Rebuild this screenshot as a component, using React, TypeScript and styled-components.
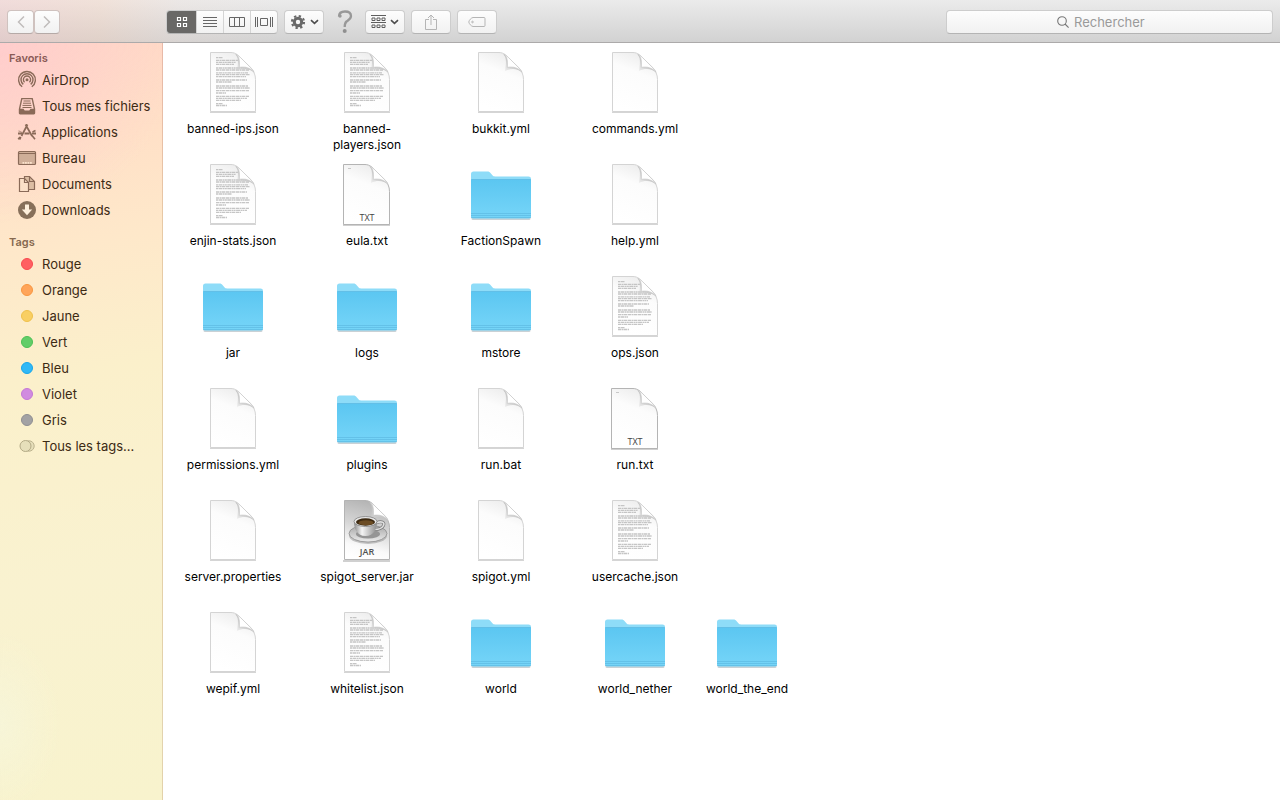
import React from "react";
import styled, { createGlobalStyle, css } from "styled-components";

const GlobalStyle = createGlobalStyle`
  *, *::before, *::after { box-sizing: border-box; }
  body {
    margin: 0;
    font-family: Inter, "Liberation Sans", sans-serif;
    font-size: 13px;
    background: #fff;
    color: #000;
  }
  button, input { font: inherit; color: inherit; }
  ul { list-style: none; margin: 0; padding: 0; }
  svg { display: block; flex: none; }
`;

const Window = styled.div`
  display: flex;
  flex-direction: column;
  min-height: 100vh;
`;

const Toolbar = styled.header`
  display: flex;
  align-items: center;
  gap: 6px;
  padding: 10px 7px 8px;
  border-bottom: 1px solid #acaaaa;
  background:
    linear-gradient(to right, rgba(255, 190, 186, 0.32), rgba(255, 205, 178, 0.3) 100px, rgba(240, 220, 212, 0.2) 180px, rgba(235, 235, 235, 0) 280px),
    linear-gradient(#ebebeb, #d2d2d2);
`;

const NavGroup = styled.nav`
  display: flex;
  width: 153px;
`;

const face = css`
  border: 1px solid #cdcdcd;
  border-bottom-color: #b4b4b4;
  background: linear-gradient(#fdfdfd, #f1f1f1);
`;

const ToolButton = styled.button<{ $width: number }>`
  ${face}
  display: flex;
  align-items: center;
  justify-content: center;
  gap: 4px;
  width: ${(p) => p.$width}px;
  height: 24px;
  padding: 0;
  border-radius: 4px;
`;

const NavButton = styled(ToolButton)`
  border-color: #cfc2bf;
  border-bottom-color: #b5aaa7;
`;

const HelpButton = styled.button`
  display: flex;
  align-items: center;
  justify-content: center;
  width: 29px;
  height: 24px;
  padding: 0;
  border: 0;
  background: none;
`;

const Segments = styled.div`
  ${face}
  display: flex;
  height: 24px;
  border-radius: 4px;
  overflow: hidden;
`;

const Segment = styled.button<{ $active?: boolean }>`
  display: flex;
  align-items: center;
  justify-content: center;
  width: ${(p) => (p.$active ? 29 : 27)}px;
  padding: 0;
  border: 0;
  border-left: ${(p) => (p.$active ? "0" : "1px solid #d4d4d4")};
  background: ${(p) => (p.$active ? "#696866" : "transparent")};
`;

const SearchField = styled.label`
  ${face}
  display: flex;
  align-items: center;
  justify-content: center;
  gap: 5px;
  flex: 0 1 327px;
  height: 24px;
  margin-left: auto;
  border-radius: 4px;
`;

const SearchInput = styled.input`
  width: 88px;
  padding: 0;
  border: 0;
  outline: 0;
  background: none;
  font-size: 13px;
  &::placeholder { color: #9a9a9a; opacity: 1; }
`;

const Body = styled.div`
  display: flex;
  flex: 1;
`;

const Sidebar = styled.aside`
  display: flex;
  flex-direction: column;
  gap: 10px;
  flex: 0 0 163px;
  padding-top: 6px;
  border-right: 1px solid rgba(190, 150, 100, 0.35);
  background:
    radial-gradient(circle at 0 0, rgba(255, 202, 206, 0.8), rgba(255, 208, 200, 0) 180px),
    radial-gradient(ellipse 60px 90px at 0 680px, rgba(246, 246, 220, 0.7), rgba(248, 245, 214, 0)),
    linear-gradient(170deg, #ffd8c6 0, #ffe0c7 110px, #fee8ca 210px, #fbf0cb 340px, #f9f2d0 540px, #f8f3cd 100%);
`;

const SectionTitle = styled.h2<{ $tone: string }>`
  margin: 0;
  padding-left: 9px;
  font-size: 11px;
  font-weight: 600;
  line-height: 18px;
  color: ${(p) => p.$tone};
`;

const SideLink = styled.a`
  display: flex;
  align-items: center;
  gap: 5px;
  height: 26px;
  padding-left: 17px;
  color: #3c2a14;
  text-decoration: none;
  white-space: nowrap;
`;

const Files = styled.main`
  flex: 1;
  min-width: 0;
  padding: 7px 0 0 3px;
`;

const FileGrid = styled.ul`
  display: grid;
  grid-template-columns: repeat(4, 134px) 90px;
  grid-auto-rows: 112px;
`;

const FileCell = styled.li<{ $column: number }>`
  grid-column: ${(p) => p.$column};
`;

const FileButton = styled.button`
  display: flex;
  flex-direction: column;
  align-items: center;
  gap: 7px;
  width: 100%;
  padding: 0;
  border: 0;
  background: none;
`;

const FileName = styled.span`
  max-width: 110px;
  font-size: 12px;
  line-height: 16px;
`;

/* ---------- file drawings ---------- */

type Kind = "folder" | "blank" | "text" | "txt" | "jar";

const FolderArt = () => (
  <svg width="64" height="64" viewBox="0 0 64 64">
    <rect x="2.500" y="55" width="59" height="3" rx="1.500" fill="#8a9aa2" opacity="0.450" />
    <path d="M2 12q0-2.500 2.500-2.500h14c1.500 0 2.300.6 3.200 1.800l1.700 2c.8.900 1.300 1.100 2.600 1.100H59.500q2.500 0 2.500 2.300V54H2z" fill="#8edcf8" />
    <path d="M2 18q0-1 1-1h58q1 0 1 1v36.500q0 2-2 2H4q-2 0-2-2z" fill="url(#folderFront)" />
    <path d="M2.500 17.500h59" stroke="#66bde3" strokeWidth="1" opacity="0.700" />
    <path d="M2 51.500h60M2 53.500h60M2 55.500h60" stroke="#58b4dc" strokeWidth="0.800" opacity="0.700" />
  </svg>
);

const PAGE = "M9.500 2.500H30c5 0 8 3.500 11 6.500l8 8c3.700 4 5.500 7.500 5.500 12.500V61.500H9.500z";
const TXT_PAGE = "M8.500 2.500H30c5 0 8 3.500 11 6.500l8 8c3.700 4 5.500 7.500 5.500 12.500V62.500H8.500z";

const TEXT_ROWS: [number, number][] = [
  [7.7, 7], [10.3, 22], [12.3, 20], [14.3, 18], [18, 30], [20, 33], [22.800, 32], [24.700, 34], [26.700, 30],
  [30, 31], [32, 16], [36, 32], [38, 34], [40.700, 33], [43, 10], [46.300, 33], [48.300, 31], [50.300, 25], [53.700, 7], [55.500, 11],
];

const PageArt = ({ kind }: { kind: Kind }) => {
  const soft = kind === "blank" || kind === "text";
  return (
    <svg width="64" height="64" viewBox="0 0 64 64">
      <path d={soft ? "M9 62.200h46" : "M8 63h47"} stroke="#777" strokeWidth="1.500" opacity={soft ? 0.3 : 0.45} />
      <path
        d={kind === "txt" ? TXT_PAGE : PAGE}
        fill={kind === "jar" ? "url(#jarPage)" : "url(#whitePage)"}
        stroke={soft ? "#d4d4d4" : "#b4b4b4"}
        strokeWidth="1"
      />
      {kind === "text" &&
        TEXT_ROWS.map(([y, w], i) => (
          <path key={y} d={`M15 ${y}h${w}`} stroke="#bcbcbc" strokeWidth="1.300" opacity="0.850" strokeDasharray={i % 2 ? "3 .5 1.500 .4 4 .6" : "2 .5 4 .5 1.400 .4"} />
        ))}
      {kind === "txt" && <path d="M13 6.500h3" stroke="#c8c8c8" strokeWidth="1" />}
      <path d="M34 4c3.500 3 3.500 8 2 17 6-3 13-2.500 17.500 2-1-3-3-5-5-7L41 9c-2.500-2.500-4.500-4.300-7-5z" fill="url(#curlShade)" />
      <path d="M35 4.500c3.300 2.200 3.800 6 3.400 12.800 5.600-.8 10.600.2 14.600 4.700-1.500-2.500-3-4-5-6l-7-7c-2-2-4-3.600-6-4.500z" fill="#fff" stroke="#c6c6c6" strokeWidth="0.600" />
      {kind === "txt" && (
        <text x="32" y="59" textAnchor="middle" fontSize="9" fontFamily="Open Sans" fill="#444">TXT</text>
      )}
      {kind === "jar" && (
        <g>
          <ellipse cx="33" cy="37.500" rx="19" ry="8.500" fill="#666" opacity="0.350" />
          <ellipse cx="33" cy="35.500" rx="19" ry="8.500" fill="url(#saucer)" stroke="#858585" strokeWidth="0.700" />
          <ellipse cx="33" cy="36" rx="12" ry="4.500" fill="#959595" />
          <path d="M41 25c6-2.500 9-.5 7.500 2.500-1.200 2.500-5 4-9 4" fill="none" stroke="#7c7c7c" strokeWidth="3" />
          <path d="M41 25c6-2.500 9-.5 7.500 2.500-1.200 2.500-5 4-9 4" fill="none" stroke="#dedede" strokeWidth="1.600" />
          <path d="M19 23.500c0 7 3 14.500 11.500 14.500S42 30.500 42 23.500z" fill="url(#cup)" />
          <ellipse cx="30.500" cy="23.500" rx="11.500" ry="5" fill="#e6e6e6" stroke="#777" strokeWidth="0.700" />
          <ellipse cx="30.500" cy="24" rx="9.500" ry="3.700" fill="#3d2a12" />
          <ellipse cx="31" cy="24.800" rx="7.500" ry="2.500" fill="#6b4c24" />
          <text x="32" y="57" textAnchor="middle" fontSize="9" fontWeight="600" fontFamily="Open Sans" fill="#505050">JAR</text>
        </g>
      )}
    </svg>
  );
};

const PaintDefs = styled.svg`
  position: absolute;
`;

const SharedPaints = () => (
  <PaintDefs width="0" height="0" aria-hidden="true">
    <defs>
      <linearGradient id="folderFront" x1="0" y1="0" x2="0" y2="1">
        <stop offset="0" stopColor="#5bc6f1" />
        <stop offset="1" stopColor="#76d5f8" />
      </linearGradient>
      <linearGradient id="whitePage" x1="0.700" y1="0" x2="0.400" y2="1">
        <stop offset="0" stopColor="#ebebeb" />
        <stop offset="0.350" stopColor="#fcfcfc" />
        <stop offset="1" stopColor="#fff" />
      </linearGradient>
      <linearGradient id="jarPage" x1="0.600" y1="0" x2="0.400" y2="1">
        <stop offset="0" stopColor="#b2b2b2" />
        <stop offset="0.450" stopColor="#d6d6d6" />
        <stop offset="0.800" stopColor="#fafafa" />
        <stop offset="1" stopColor="#fff" />
      </linearGradient>
      <linearGradient id="curlShade" x1="0" y1="1" x2="1" y2="0">
        <stop offset="0" stopColor="#ddd" stopOpacity="0.200" />
        <stop offset="0.500" stopColor="#c4c4c4" />
        <stop offset="1" stopColor="#e6e6e6" />
      </linearGradient>
      <linearGradient id="saucer" x1="0" y1="0" x2="0" y2="1">
        <stop offset="0" stopColor="#a5a5a5" />
        <stop offset="1" stopColor="#ececec" />
      </linearGradient>
      <linearGradient id="cup" x1="0" y1="0" x2="1" y2="0">
        <stop offset="0" stopColor="#8d8d8d" />
        <stop offset="0.350" stopColor="#f4f4f4" />
        <stop offset="1" stopColor="#8e8e8e" />
      </linearGradient>
    </defs>
  </PaintDefs>
);

/* ---------- sidebar drawings ---------- */

const Glyph = ({ children }: { children: React.ReactNode }) => (
  <svg width="20" height="20" viewBox="0 0 20 20" fill="none" stroke="#8a6a58" strokeWidth="1.200">
    {children}
  </svg>
);

const AirDropIcon = () => (
  <Glyph>
    <path d="M5.200 16.800a8.400 8.400 0 1 1 9.600 0M6.300 14.400a6 6 0 1 1 7.400 0M7.600 12.300a3.600 3.600 0 1 1 4.800 0" strokeWidth="1.400" />
    <circle cx="10" cy="9.800" r="1.500" fill="#8a6a58" stroke="none" />
  </Glyph>
);

const AllFilesIcon = () => (
  <Glyph>
    <path d="M4.800 2.600h10.400l2.300 10.500v4q0 .6-.6.6H3.100q-.6 0-.6-.6v-4z" strokeWidth="1.400" />
    <path d="M3 12.800h3.500l1.200 1.600h4.600l1.200-1.600H17v4.700H3z" fill="#8a6a58" stroke="none" />
    <path d="M6.500 5h7M6 7.200h8M5.500 9.400h9M5.500 11.500h9" strokeWidth="1" />
  </Glyph>
);

const AppsIcon = () => (
  <Glyph>
    <path d="M4.500 14L10.500 2.500M2.500 17.500l1.300-2.500M8.500 2.500l6.500 11.500" strokeWidth="1.700" />
    <path d="M1 11.500h4M7.500 11.500h5M15 11.500h4" strokeWidth="1.900" />
    <path d="M15 13.500l3 3.700M1.200 17.200l1.800-2.200M15.500 10l3-1.500" strokeWidth="1.600" />
    <path d="M1.500 8.800l3.500 1.700" strokeWidth="1.200" opacity="0.600" />
  </Glyph>
);

const DesktopIcon = () => (
  <Glyph>
    <rect x="1.500" y="3.500" width="17" height="13" rx="1" fill="#cfae98" />
    <path d="M2 5.500h16" strokeWidth="1" />
    <path d="M5.500 14.800h9.500" stroke="#fbe2cc" strokeWidth="1.800" strokeDasharray="1.800 .7" />
  </Glyph>
);

const DocumentsIcon = () => (
  <Glyph>
    <path d="M7.500 2.500h5l5 5v8h-10z" fill="#dcbea4" />
    <path d="M12.500 2.500v5h5" />
    <path d="M2.500 4.500h5l4 4v9h-9z" fill="#fbe0c8" />
    <path d="M7.500 4.500v4h4" />
  </Glyph>
);

const DownloadsIcon = () => (
  <Glyph>
    <circle cx="10" cy="10" r="9" fill="#87705a" stroke="none" />
    <path d="M8 4.500h4v5h3.200L10 15.300 4.800 9.500H8z" fill="#fff0dc" stroke="none" />
  </Glyph>
);

const TagDot = ({ fill, edge }: { fill: string; edge: string }) => (
  <Glyph>
    <circle cx="10" cy="10" r="5.500" fill={fill} stroke={edge} strokeWidth="1" />
  </Glyph>
);

const AllTagsIcon = () => (
  <Glyph>
    <circle cx="12" cy="10" r="5.200" fill="#e6dfba" stroke="#bdb490" strokeWidth="1" />
    <circle cx="8.500" cy="10" r="5.500" fill="#e6dfba" stroke="#b3aa86" strokeWidth="1" />
  </Glyph>
);

const Caret = () => (
  <svg width="9" height="6" viewBox="0 0 9 6" fill="none" stroke="#4d4d4d" strokeWidth="1.600">
    <path d="M1 1.200l3.500 3.200L8 1.200" />
  </svg>
);

/* ---------- data ---------- */

const favourites: [string, React.ReactNode][] = [
  ["AirDrop", <AirDropIcon />],
  ["Tous mes fichiers", <AllFilesIcon />],
  ["Applications", <AppsIcon />],
  ["Bureau", <DesktopIcon />],
  ["Documents", <DocumentsIcon />],
  ["Downloads", <DownloadsIcon />],
];

const tags: [string, React.ReactNode][] = [
  ["Rouge", <TagDot fill="#ff5f62" edge="#f84a4e" />],
  ["Orange", <TagDot fill="#ffa55a" edge="#f8963f" />],
  ["Jaune", <TagDot fill="#f9cf63" edge="#efc14c" />],
  ["Vert", <TagDot fill="#62cd68" edge="#4cc055" />],
  ["Bleu", <TagDot fill="#30b8f6" edge="#18a6ea" />],
  ["Violet", <TagDot fill="#d18be0" edge="#c478d6" />],
  ["Gris", <TagDot fill="#a3a2a4" edge="#8f8e92" />],
  ["Tous les tags...", <AllTagsIcon />],
];

const files: [string, Kind][] = [
  ["banned-ips.json", "text"], ["banned-players.json", "text"], ["bukkit.yml", "blank"], ["commands.yml", "blank"],
  ["enjin-stats.json", "text"], ["eula.txt", "txt"], ["FactionSpawn", "folder"], ["help.yml", "blank"],
  ["jar", "folder"], ["logs", "folder"], ["mstore", "folder"], ["ops.json", "text"],
  ["permissions.yml", "blank"], ["plugins", "folder"], ["run.bat", "blank"], ["run.txt", "txt"],
  ["server.properties", "blank"], ["spigot_server.jar", "jar"], ["spigot.yml", "blank"], ["usercache.json", "text"],
  ["wepif.yml", "blank"], ["whitelist.json", "text"], ["world", "folder"], ["world_nether", "folder"],
  ["world_the_end", "folder"],
];

const SideSection = ({ title, tone, items }: { title: string; tone: string; items: [string, React.ReactNode][] }) => (
  <section>
    <SectionTitle $tone={tone}>{title}</SectionTitle>
    <ul>
      {items.map(([name, icon]) => (
        <li key={name}>
          <SideLink href="#">
            {icon}
            {name}
          </SideLink>
        </li>
      ))}
    </ul>
  </section>
);

export default function App() {
  return (
    <Window>
      <GlobalStyle />
      <SharedPaints />
      <Toolbar>
        <NavGroup>
          <NavButton $width={27} aria-label="Précédent">
            <svg width="8" height="14" viewBox="0 0 8 14" fill="none" stroke="#c0bcbb" strokeWidth="1.500"><path d="M7 1.500L1.500 7 7 12.500" /></svg>
          </NavButton>
          <NavButton $width={26} aria-label="Suivant">
            <svg width="8" height="14" viewBox="0 0 8 14" fill="none" stroke="#c0bcbb" strokeWidth="1.500"><path d="M1 1.500L6.500 7 1 12.500" /></svg>
          </NavButton>
        </NavGroup>
        <Segments>
          <Segment $active aria-label="Icônes">
            <svg width="12" height="12" viewBox="0 0 12 12" fill="none" stroke="#fff" strokeWidth="1.200">
              <path d="M1.500 1.500h3v3h-3zM7.500 1.500h3v3h-3zM1.500 7.500h3v3h-3zM7.500 7.500h3v3h-3z" />
            </svg>
          </Segment>
          <Segment aria-label="Liste">
            <svg width="14" height="12" viewBox="0 0 14 12" stroke="#666"><path d="M0 1.500h14M0 4.500h14M0 7.500h14M0 10.500h14" /></svg>
          </Segment>
          <Segment aria-label="Colonnes">
            <svg width="16" height="12" viewBox="0 0 16 12" fill="none" stroke="#666"><path d="M.5 1.500h15v9H.5zM5.500 1.500v9M10.500 1.500v9" /></svg>
          </Segment>
          <Segment aria-label="Cover Flow">
            <svg width="18" height="12" viewBox="0 0 18 12" fill="none" stroke="#666"><path d="M.5 1v10M2.500 1v10M15.500 1v10M17.500 1v10M5.500 2.500h7v7h-7z" /></svg>
          </Segment>
        </Segments>
        <ToolButton $width={40} aria-label="Action">
          <svg width="16" height="16" viewBox="0 0 16 16" fill="none" stroke="#696969">
            <circle cx="8" cy="8" r="3.700" strokeWidth="3" />
            <circle cx="8" cy="8" r="6" strokeWidth="2.200" strokeDasharray="2.300 2.412" />
          </svg>
          <Caret />
        </ToolButton>
        <HelpButton aria-label="Aide">
          <svg width="16" height="24" viewBox="0 0 16 24" fill="none" stroke="#989898">
            <path d="M2 6.500C2 3 4.500 1.500 8 1.500s6 1.500 6 4.500-2.500 4-4.500 5.500C8 12.700 7.700 14 7.700 17" strokeWidth="2.300" />
            <circle cx="3" cy="6" r="1.700" fill="#989898" stroke="none" />
            <circle cx="7.700" cy="21" r="2" fill="#8f8f8f" stroke="none" />
          </svg>
        </HelpButton>
        <ToolButton $width={40} aria-label="Grouper">
          <svg width="15" height="14" viewBox="0 0 15 14" fill="none" stroke="#5e5e5e">
            <path d="M0 .5h15M0 7.500h15M1 3h3v2.500H1zM6 3h3v2.500H6zM11 3h3v2.500h-3zM1 10h3v2.500H1zM6 10h3v2.500H6zM11 10h3v2.500h-3z" />
          </svg>
          <Caret />
        </ToolButton>
        <ToolButton $width={40} aria-label="Partager">
          <svg width="12" height="16" viewBox="0 0 12 16" fill="none" stroke="#b5b5b5">
            <path d="M4 5.500H.5v10h11v-10H8M6 11V1M3 4l3-3 3 3" />
          </svg>
        </ToolButton>
        <ToolButton $width={40} aria-label="Tags">
          <svg width="18" height="12" viewBox="0 0 18 12" fill="none" stroke="#b5b5b5">
            <path d="M5 1.500h11q1 0 1 1v7q0 1-1 1H5C3.500 10.500.8 7.500.8 6S3.500 1.500 5 1.500z" />
            <circle cx="4.500" cy="6" r="0.800" />
          </svg>
        </ToolButton>
        <SearchField>
          <svg width="12" height="12" viewBox="0 0 12 12" fill="none" stroke="#777" strokeWidth="1.100">
            <circle cx="5" cy="5" r="4.300" /><path d="M8 8l3.600 3.600" />
          </svg>
          <SearchInput type="text" placeholder="Rechercher" aria-label="Rechercher" />
        </SearchField>
      </Toolbar>
      <Body>
        <Sidebar>
          <SideSection title="Favoris" tone="#8a5b56" items={favourites} />
          <SideSection title="Tags" tone="#86694f" items={tags} />
        </Sidebar>
        <Files>
          <FileGrid>
            {files.map(([name, kind], i) => (
              <FileCell key={name} $column={i === 24 ? 5 : (i % 4) + 1}>
                <FileButton>
                  {kind === "folder" ? <FolderArt /> : <PageArt kind={kind} />}
                  <FileName>{name}</FileName>
                </FileButton>
              </FileCell>
            ))}
          </FileGrid>
        </Files>
      </Body>
    </Window>
  );
}
